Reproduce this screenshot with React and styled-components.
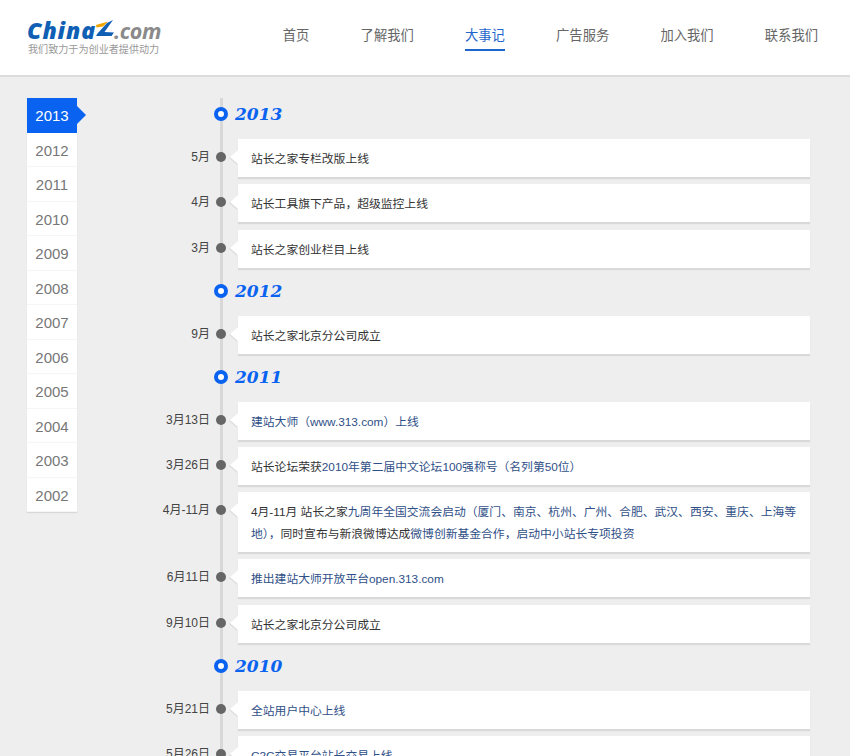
import React from 'react';
import styled, { createGlobalStyle } from 'styled-components';

const GlobalStyle = createGlobalStyle`
  html, body {
    margin: 0;
    height: 756px;
    overflow: hidden;
    background: #eeeeee;
    font-family: "Liberation Sans", "Noto Sans CJK SC", sans-serif;
  }
`;

const navItems = ['首页', '了解我们', '大事记', '广告服务', '加入我们', '联系我们'];
const years = ['2013', '2012', '2011', '2010', '2009', '2008', '2007', '2006', '2005', '2004', '2003', '2002'];

// d: plain text, l: blue linked text
const events = [
  { year: '2013', items: [
    { date: '5月', parts: [{ d: '站长之家专栏改版上线' }] },
    { date: '4月', parts: [{ d: '站长工具旗下产品，超级监控上线' }] },
    { date: '3月', parts: [{ d: '站长之家创业栏目上线' }] },
  ] },
  { year: '2012', items: [
    { date: '9月', parts: [{ d: '站长之家北京分公司成立' }] },
  ] },
  { year: '2011', items: [
    { date: '3月13日', parts: [{ l: '建站大师（www.313.com）上线' }] },
    { date: '3月26日', parts: [{ d: '站长论坛荣获' }, { l: '2010年第二届中文论坛100强称号（名列第50位）' }] },
    { date: '4月-11月', parts: [{ d: '4月-11月 站长之家' }, { l: '九周年全国交流会启动（厦门、南京、杭州、广州、合肥、武汉、西安、重庆、上海等地），' }, { d: '同时宣布与新浪微博达成' }, { l: '微博创新基金合作，启动中小站长专项投资' }] },
    { date: '6月11日', parts: [{ l: '推出建站大师开放平台open.313.com' }] },
    { date: '9月10日', parts: [{ d: '站长之家北京分公司成立' }] },
  ] },
  { year: '2010', items: [
    { date: '5月21日', parts: [{ l: '全站用户中心上线' }] },
    { date: '5月26日', parts: [{ l: 'C2C交易平台站长交易上线' }] },
  ] },
];

function Logo () {
  return (
    <LogoBox>
      <LogoWord>
        <LogoChina>China</LogoChina>
        <LogoMark width="19" height="18" viewBox="0 0 19 18">
          <path d="M1 5 L13 1.5 L8 6.5 L1.5 7.5 Z" fill="#f0a400" />
          <path d="M18 0 L9.5 12 L19 12.5 L16.5 16 L1 16 L2.5 13.5 L12 3 Z" fill="#0f5fb5" />
        </LogoMark>
        <LogoCom>.com</LogoCom>
      </LogoWord>
      <Slogan>我们致力于为创业者提供动力</Slogan>
    </LogoBox>
  );
}

function EventRow ({ item }) {
  return (
    <Row>
      <DateLabel>{item.date}</DateLabel>
      <Dot />
      <Card>
        {item.parts.map((part, i) => part.l
          ? <LinkText key={i}>{part.l}</LinkText>
          : <span key={i}>{part.d}</span>)}
      </Card>
    </Row>
  );
}

export default function App () {
  return (
    <>
      <GlobalStyle />
      <Header>
        <Logo />
        <Nav>
          {navItems.map(name => <NavLink key={name} $active={name === '大事记'}>{name}</NavLink>)}
        </Nav>
      </Header>
      <Main>
        <Sidebar>
          {years.map(y => <YearTab key={y} $active={y === '2013'}>{y}</YearTab>)}
        </Sidebar>
        <Timeline>
          {events.map((group, i) => (
            <section key={group.year}>
              <YearRow $first={i === 0}>
                <YearDot />
                <YearTitle>{group.year}</YearTitle>
              </YearRow>
              {group.items.map(item => <EventRow key={item.date} item={item} />)}
            </section>
          ))}
        </Timeline>
      </Main>
    </>
  );
}

const Header = styled.header`
  box-sizing: border-box;
  height: 77px;
  padding: 17px 32px 0 27px;
  display: flex;
  justify-content: space-between;
  align-items: flex-start;
  background: #fff;
  border-bottom: 2px solid #dcdcdc;
`;

const LogoBox = styled.div`
  display: flex;
  flex-direction: column;
`;

const LogoWord = styled.div`
  display: flex;
  align-items: center;
  height: 26px;
  font-family: "Open Sans", sans-serif;
  font-size: 23px;
  font-style: italic;
`;

const LogoChina = styled.span`
  font-weight: 800;
  letter-spacing: 0.9px;
  color: #0f5fb5;
`;

const LogoMark = styled.svg`
  flex: none;
  margin: -3px 0 0 -1px;
`;

const LogoCom = styled.span`
  font-weight: 700;
  font-size: 21.5px;
  letter-spacing: -0.4px;
  color: #8a8a8a;
`;

const Slogan = styled.div`
  padding-left: 1px;
  font-size: 10.1px;
  line-height: 13px;
  color: #999;
  white-space: nowrap;
`;

const Nav = styled.nav`
  display: flex;
  gap: 51.2px;
`;

const NavLink = styled.a`
  height: 34px;
  box-sizing: border-box;
  padding-top: 9px;
  font-size: 13.3px;
  line-height: 20px;
  color: ${props => props.$active ? '#1f66cc' : '#666'};
  border-bottom: 2px solid ${props => props.$active ? '#1f66cc' : 'transparent'};
`;

const Main = styled.main`
  display: flex;
  align-items: flex-start;
  padding: 21px 0 0 27px;
`;

const Sidebar = styled.aside`
  width: 50px;
  flex: none;
  background: #fff;
  box-shadow: 0 1px 1px #d8d8d8;
`;

const YearTab = styled.div`
  position: relative;
  box-sizing: border-box;
  height: 34.5px;
  padding-top: 1px;
  font-size: 15px;
  line-height: 33px;
  text-align: center;
  color: ${props => props.$active ? '#fff' : '#777'};
  background: ${props => props.$active ? '#0a63f0' : '#fff'};
  border-bottom: 1px solid ${props => props.$active ? '#0a63f0' : '#f6f6f6'};

  &::after {
    content: ${props => props.$active ? '""' : 'none'};
    position: absolute;
    left: 50px;
    top: 8px;
    border-left: 9px solid #0a63f0;
    border-top: 9px solid transparent;
    border-bottom: 9px solid transparent;
  }
`;

const Timeline = styled.div`
  width: 733px;
  background: linear-gradient(#d8d8d8, #d8d8d8) no-repeat 143px 0 / 3px 100%;
`;

const YearRow = styled.div`
  box-sizing: border-box;
  height: ${props => props.$first ? '41px' : '40.7px'};
  display: flex;
  align-items: center;
  gap: 7px;
  padding: 0 0 9px 137px;
`;

const YearDot = styled.span`
  box-sizing: border-box;
  width: 14px;
  height: 14px;
  border: 4px solid #0a63f0;
  border-radius: 50%;
  background: #fff;
`;

const YearTitle = styled.span`
  font-family: "DejaVu Serif", serif;
  font-size: 17px;
  font-weight: 700;
  font-style: italic;
  color: #0a63f0;
`;

const Row = styled.div`
  display: flex;
  align-items: flex-start;
  margin-bottom: 7.3px;
`;

const DateLabel = styled.div`
  box-sizing: border-box;
  width: 133px;
  padding-top: 11px;
  font-size: 12px;
  line-height: 14px;
  text-align: right;
  color: #444;
`;

const Dot = styled.span`
  flex: none;
  width: 10px;
  height: 10px;
  margin: 13px 0 0 6px;
  border-radius: 50%;
  background: #666;
`;

const Card = styled.div`
  position: relative;
  box-sizing: border-box;
  width: 572px;
  min-height: 38px;
  margin-left: 12px;
  padding: 9px 13px 7px;
  font-size: 11.8px;
  line-height: 22px;
  color: #333;
  background: #fff;
  box-shadow: 0 2px 1px #d9d9d9;

  &::before {
    content: "";
    position: absolute;
    left: -8px;
    top: 11px;
    border-right: 8px solid #fff;
    border-top: 7px solid transparent;
    border-bottom: 7px solid transparent;
    filter: drop-shadow(-1px 1px 0 #dedede);
  }
`;

const LinkText = styled.span`
  color: #2f4f87;
`;
